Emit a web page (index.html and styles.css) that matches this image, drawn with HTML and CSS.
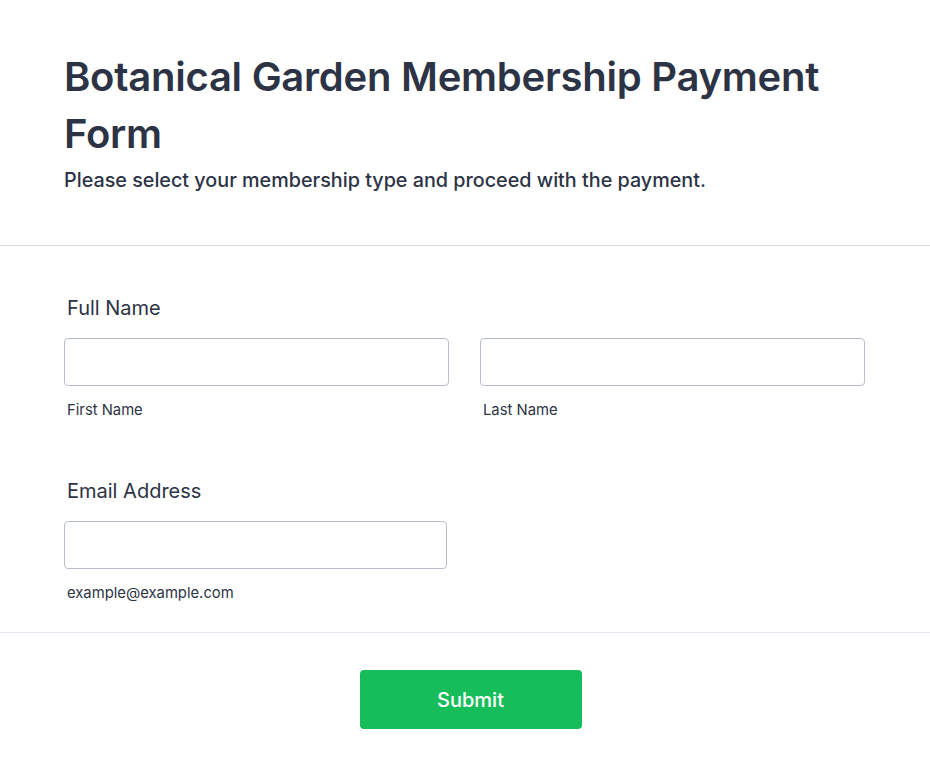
FILE: index.html
```html
<!DOCTYPE html>
<html lang="en">
<head>
<meta charset="utf-8">
<title>Botanical Garden Membership Payment Form</title>
<link rel="stylesheet" href="styles.css">
</head>
<body>
<div class="page">
  <header class="header">
    <h1 class="title">Botanical Garden Membership Payment Form</h1>
    <p class="subtitle">Please select your membership type and proceed with the payment.</p>
  </header>
  <form class="form">
    <div class="field">
      <label class="label">Full Name</label>
      <div class="row">
        <div class="col">
          <input class="input" type="text">
          <span class="sublabel">First Name</span>
        </div>
        <div class="col">
          <input class="input" type="text">
          <span class="sublabel">Last Name</span>
        </div>
      </div>
    </div>
    <div class="field field-email">
      <label class="label">Email Address</label>
      <div class="col col-email">
        <input class="input" type="email">
        <span class="sublabel">example@example.com</span>
      </div>
    </div>
  </form>
  <div class="actions">
    <button class="submit" type="button">Submit</button>
  </div>
</div>
</body>
</html>
```
FILE: styles.css
```css
* { box-sizing: border-box; }
html, body { margin: 0; padding: 0; background: #fff; }
body {
  font-family: Inter, "Noto Sans", sans-serif;
  color: #2c3345;
}
.header {
  padding: 48px 64px 50px 64px;
  border-bottom: 1px solid #d8dbe6;
}
.title {
  margin: 0;
  font-size: 40px;
  line-height: 57px;
  font-weight: 600;
  color: #2c3345;
  letter-spacing: -0.25px;
}
.subtitle {
  margin: 3px 0 0 0;
  font-size: 19.75px;
  line-height: 30px;
  font-weight: 500;
  color: #2c3345;
}
.form {
  padding: 49px 65px 28px 64px;
  border-bottom: 1px solid #e6e8f4;
}
.field { display: flex; flex-direction: column; }
.field-email { margin-top: 57px; }
.label {
  font-size: 20px;
  line-height: 27px;
  font-weight: 400;
  padding-left: 3px;
  margin-bottom: 16px;
  color: #2c3345;
}
.row {
  display: grid;
  grid-template-columns: 1fr 1fr;
  column-gap: 31px;
}
.col { display: flex; flex-direction: column; }
.col-email { width: 383px; }
.input {
  height: 48px;
  width: 100%;
  border: 1px solid #b8bdcc;
  border-radius: 4px;
  background: #fff;
  font: inherit;
  margin: 0;
}
.sublabel {
  margin-top: 14px;
  padding-left: 3px;
  font-size: 14.8px;
  line-height: 21px;
  color: #2c3345;
}
.actions {
  display: flex;
  justify-content: center;
  padding: 37px 0 0 0;
}
.submit {
  width: 222px;
  height: 59px;
  margin-left: 11px;
  border: none;
  border-radius: 4px;
  background: #18bd5b;
  color: #fff;
  font-family: Inter, "Noto Sans", sans-serif;
  font-size: 20px;
  font-weight: 500;
}
```
